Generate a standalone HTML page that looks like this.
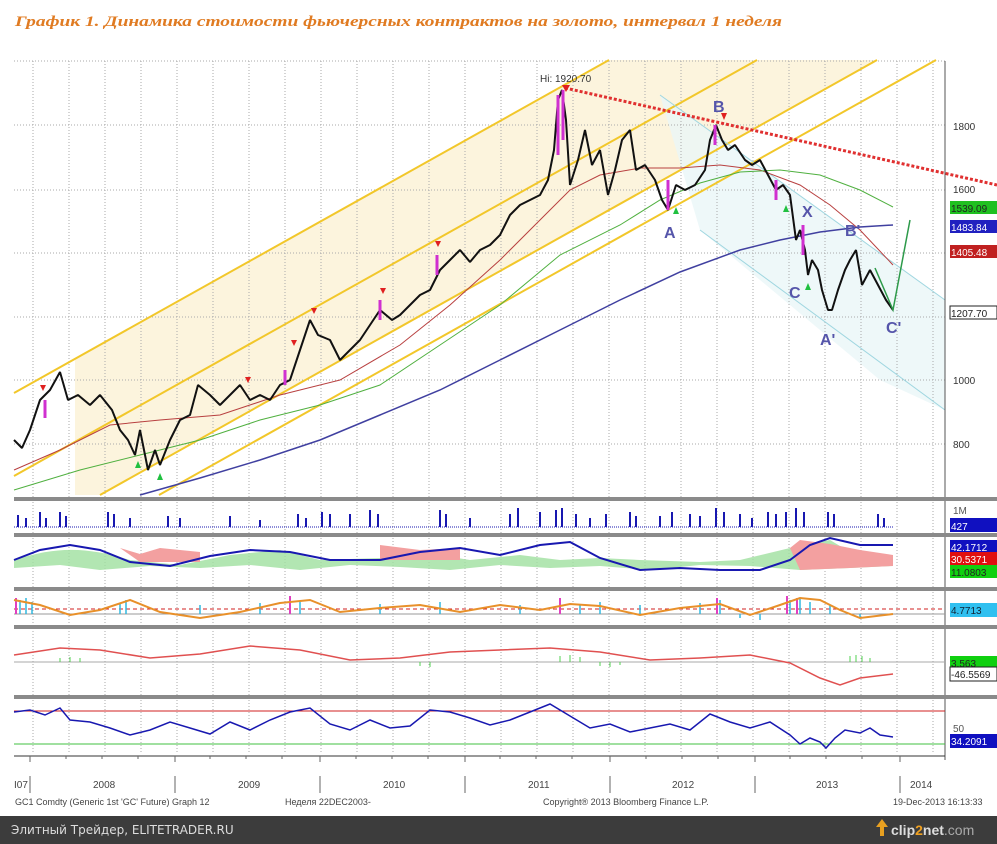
<!DOCTYPE html>
<html><head><meta charset="utf-8"><style>
html,body{margin:0;padding:0;background:#fff;width:997px;height:844px;overflow:hidden}
svg{display:block}
text{font-family:"Liberation Sans",sans-serif}
</style></head><body>
<svg width="997" height="844" viewBox="0 0 997 844">
<text x="15" y="26" textLength="767" lengthAdjust="spacingAndGlyphs" font-style="italic" font-weight="bold" font-size="15" fill="#e07b22" style="font-family:'Liberation Serif','Noto Serif CJK SC',serif">График 1.   Динамика стоимости фьючерсных контрактов на золото, интервал 1 неделя</text>
<polygon points="75,360 609,60 877,60 100,495 75,495" fill="#fbf1d4" opacity="0.8"/>
<polygon points="660,95 945,300 945,410 880,380 700,230" fill="#eaf6f8" opacity="0.8"/>
<g stroke="#aaa" stroke-dasharray="1,2" stroke-width="1">
<line x1="14" y1="61" x2="945" y2="61"/><line x1="14" y1="125" x2="945" y2="125"/><line x1="14" y1="190" x2="945" y2="190"/><line x1="14" y1="253" x2="945" y2="253"/><line x1="14" y1="317" x2="945" y2="317"/><line x1="14" y1="380" x2="945" y2="380"/><line x1="14" y1="444" x2="945" y2="444"/>
<line x1="33" y1="61" x2="33" y2="752"/><line x1="69" y1="61" x2="69" y2="752"/><line x1="105" y1="61" x2="105" y2="752"/><line x1="141" y1="61" x2="141" y2="752"/><line x1="177" y1="61" x2="177" y2="752"/><line x1="213" y1="61" x2="213" y2="752"/><line x1="249" y1="61" x2="249" y2="752"/><line x1="285" y1="61" x2="285" y2="752"/><line x1="321" y1="61" x2="321" y2="752"/><line x1="357" y1="61" x2="357" y2="752"/><line x1="393" y1="61" x2="393" y2="752"/><line x1="429" y1="61" x2="429" y2="752"/><line x1="465" y1="61" x2="465" y2="752"/><line x1="501" y1="61" x2="501" y2="752"/><line x1="537" y1="61" x2="537" y2="752"/><line x1="573" y1="61" x2="573" y2="752"/><line x1="609" y1="61" x2="609" y2="752"/><line x1="645" y1="61" x2="645" y2="752"/><line x1="681" y1="61" x2="681" y2="752"/><line x1="717" y1="61" x2="717" y2="752"/><line x1="753" y1="61" x2="753" y2="752"/><line x1="789" y1="61" x2="789" y2="752"/><line x1="825" y1="61" x2="825" y2="752"/><line x1="861" y1="61" x2="861" y2="752"/><line x1="897" y1="61" x2="897" y2="752"/><line x1="933" y1="61" x2="933" y2="752"/>
</g>
<g stroke="#f2c72a" stroke-width="2" fill="none">
<line x1="14" y1="393" x2="609" y2="60"/><line x1="14" y1="476" x2="757" y2="60"/><line x1="100" y1="495" x2="877" y2="60"/><line x1="159" y1="495" x2="936" y2="60"/>
</g>
<g stroke="#9fd6e0" stroke-width="1" fill="none"><line x1="660" y1="95" x2="945" y2="300"/><line x1="700" y1="230" x2="945" y2="410"/></g>
<polyline fill="none" stroke="#b84040" stroke-width="1" points="14,470 60,450 110,425 160,420 220,415 280,395 340,380 400,345 450,305 500,260 540,220 570,190 600,175 640,168 680,168 720,165 760,170 800,185 830,205 860,230 893,265"/>
<polyline fill="none" stroke="#50b040" stroke-width="1" points="14,490 80,470 140,455 200,440 260,420 320,405 380,385 440,345 500,305 560,255 620,225 660,200 700,183 740,172 780,170 820,175 860,190 893,207"/>
<polyline fill="none" stroke="#4040a0" stroke-width="1.5" points="140,495 200,478 260,460 320,440 380,415 440,390 500,360 560,330 620,300 680,272 740,250 780,240 820,232 860,227 893,225"/>
<line x1="565" y1="88" x2="997" y2="185" stroke="#e03030" stroke-width="3" stroke-dasharray="3,2"/>
<polyline fill="none" stroke="#111" stroke-width="2" stroke-linejoin="bevel" points="14,440 22,448 30,430 40,400 50,390 60,372 68,400 78,395 90,405 100,395 112,410 120,430 128,440 135,455 140,430 148,470 155,450 160,465 170,440 180,420 190,415 198,385 210,395 220,405 230,395 240,385 250,400 260,395 270,400 280,385 290,380 300,350 310,320 318,335 330,340 340,360 350,350 360,340 370,325 380,310 392,320 400,315 410,305 420,295 430,290 440,270 450,260 460,250 470,262 480,250 490,245 500,235 510,215 520,205 530,200 540,195 548,180 554,150 558,100 562,90 566,120 570,185 578,160 585,130 592,165 600,150 608,195 615,170 622,140 630,130 636,170 645,165 655,180 662,200 668,210 676,185 685,190 695,185 705,170 710,140 716,125 722,140 728,150 735,145 745,160 752,165 760,160 768,175 776,190 783,185 790,195 796,240 800,230 805,250 808,275 812,260 818,270 822,290 828,310 832,310 838,290 845,270 850,260 856,250 862,285 870,270 878,285 886,300 893,310"/>
<polyline fill="none" stroke="#2d9a4a" stroke-width="1.5" points="875,268 893,310 910,220"/>
<g stroke="#d030d0" stroke-width="3"><line x1="558" y1="95" x2="558" y2="155"/><line x1="563" y1="90" x2="563" y2="140"/><line x1="668" y1="180" x2="668" y2="210"/><line x1="715" y1="125" x2="715" y2="145"/><line x1="803" y1="225" x2="803" y2="255"/><line x1="776" y1="180" x2="776" y2="200"/><line x1="437" y1="255" x2="437" y2="275"/><line x1="380" y1="300" x2="380" y2="320"/><line x1="285" y1="370" x2="285" y2="385"/><line x1="45" y1="400" x2="45" y2="418"/></g>
<g fill="#e02020"><polygon points="40,385 46,385 43,391"/><polygon points="245,377 251,377 248,383"/><polygon points="291,340 297,340 294,346"/><polygon points="311,308 317,308 314,314"/><polygon points="380,288 386,288 383,294"/><polygon points="435,241 441,241 438,247"/><polygon points="562,85 570,85 566,92"/><polygon points="721,113 727,113 724,120"/></g>
<g fill="#20c040"><polygon points="135,468 141,468 138,461"/><polygon points="157,480 163,480 160,473"/><polygon points="673,214 679,214 676,207"/><polygon points="783,212 789,212 786,205"/><polygon points="805,290 811,290 808,283"/></g>
<g font-family="Liberation Serif,serif" font-weight="bold" font-size="16" fill="#5555aa" style="font-family:'Liberation Serif',serif"><text x="664" y="238">A</text><text x="713" y="112">B</text><text x="789" y="298">C</text><text x="802" y="217">X</text><text x="845" y="236">B'</text><text x="820" y="345">A'</text><text x="886" y="333">C'</text></g>
<text x="540" y="82" font-size="10" fill="#333">Hi: 1920.70</text>
<line x1="945" y1="61" x2="945" y2="760" stroke="#555"/>
<g font-size="10" fill="#333"><text x="953" y="130">1800</text><text x="953" y="193">1600</text><text x="953" y="384">1000</text><text x="953" y="448">800</text></g>
<g font-size="10">
<rect x="950" y="201" width="47" height="13" fill="#20c020"/><text x="951" y="212" fill="#222">1539.09</text>
<rect x="950" y="220" width="47" height="13" fill="#2020c0"/><text x="951" y="231" fill="#fff">1483.84</text>
<rect x="950" y="245" width="47" height="13" fill="#c02020"/><text x="951" y="256" fill="#fff">1405.48</text>
<rect x="950" y="306" width="47" height="13" fill="#fff" stroke="#222"/><text x="951" y="317" fill="#222">1207.70</text>
</g>
<g fill="#8a8a8a"><rect x="14" y="497" width="983" height="4"/><rect x="14" y="533" width="983" height="4"/><rect x="14" y="587" width="983" height="4"/><rect x="14" y="625" width="983" height="4"/><rect x="14" y="695" width="983" height="4"/></g>
<g stroke="#1818b0" stroke-width="2">
<path d="M18 527V515M26 527V518M40 527V512M46 527V518M60 527V512M66 527V516M108 527V512M114 527V514M130 527V518M168 527V516M180 527V518M230 527V516M260 527V520M298 527V514M306 527V518M322 527V512M330 527V514M350 527V514M370 527V510M378 527V514M440 527V510M446 527V514M470 527V518M510 527V514M518 527V508M540 527V512M556 527V510M562 527V508M576 527V514M590 527V518M606 527V514M630 527V512M636 527V516M660 527V516M672 527V512M690 527V514M700 527V516M716 527V508M724 527V512M740 527V514M752 527V518M768 527V512M776 527V514M786 527V512M796 527V508M804 527V512M828 527V512M834 527V514M878 527V514M884 527V518"/>
</g>
<line x1="14" y1="527" x2="893" y2="527" stroke="#1818b0" stroke-width="1" stroke-dasharray="1,1"/>
<rect x="950" y="518" width="47" height="14" fill="#1010c0"/><text x="951" y="530" font-size="10" fill="#fff">427</text><text x="953" y="514" font-size="10" fill="#555">1M</text>
<path d="M14 560 C60 545 90 548 130 560 L180 565 230 555 280 550 320 560 380 558 420 552 470 560 520 555 560 560 600 558 640 560 700 562 740 560 790 548 830 540 850 552 893 557 L893 566 850 568 800 570 750 566 700 565 650 570 600 566 550 568 500 565 450 570 400 567 350 565 300 570 250 565 200 568 150 566 100 570 60 565 14 568Z" fill="#9fe09f" opacity="0.8"/>
<path d="M790 548 L800 540 830 544 860 550 893 555 L893 566 850 568 800 570Z" fill="#f3a0a0"/>
<path d="M120 548 L140 554 160 548 200 552 L200 562 140 562Z M380 545 L420 550 460 548 L460 560 380 560Z" fill="#f3a0a0"/>
<polyline fill="none" stroke="#1818b0" stroke-width="2" points="14,560 40,550 70,545 100,550 130,562 170,566 210,556 250,550 290,552 330,560 380,560 420,552 460,548 500,555 540,545 570,542 600,558 640,570 680,568 720,570 760,570 790,560 810,545 830,538 860,545 893,545"/>
<rect x="950" y="540" width="47" height="13" fill="#1010c0"/><text x="951" y="551" font-size="10" fill="#fff">42.1712</text>
<rect x="950" y="552" width="47" height="13" fill="#e01010"/><text x="951" y="563" font-size="10" fill="#fff">30.5371</text>
<rect x="950" y="565" width="47" height="13" fill="#10d010"/><text x="951" y="576" font-size="10" fill="#222">11.0803</text>
<line x1="14" y1="609" x2="945" y2="609" stroke="#d02020" stroke-dasharray="4,3"/>
<line x1="14" y1="614" x2="945" y2="614" stroke="#999"/>
<g stroke="#30b8e0" stroke-width="1.5"><path d="M20 614V600M26 614V598M32 614V602M120 614V604M126 614V600M200 614V605M260 614V603M290 614V598M300 614V602M380 614V604M440 614V602M520 614V605M580 614V604M600 614V602M640 614V605M700 614V603M720 614V600M740 614V618M760 614V620M790 614V600M800 614V598M810 614V602M830 614V605M860 614V618"/></g>
<g stroke="#e040c0" stroke-width="2"><path d="M16 614V598M290 614V596M560 614V598M717 614V598M787 614V596M797 614V598"/></g>
<polyline fill="none" stroke="#e8902a" stroke-width="2" points="14,600 40,605 70,615 100,610 130,600 160,612 200,618 240,612 280,603 310,600 340,612 380,608 420,605 460,612 500,605 540,610 570,604 600,606 640,615 680,608 720,604 750,615 780,605 800,598 820,600 840,610 860,618 893,614"/>
<rect x="950" y="603" width="47" height="14" fill="#30c0f0"/><text x="951" y="614" font-size="10" fill="#123">4.7713</text>
<line x1="14" y1="662" x2="945" y2="662" stroke="#aaa"/>
<polyline fill="none" stroke="#e05050" stroke-width="1.5" points="14,655 60,648 100,650 150,658 200,654 250,646 300,650 350,660 400,658 450,652 500,650 550,648 600,652 650,660 700,658 750,655 790,663 820,678 840,685 860,678 893,674"/>
<g stroke="#50d050" stroke-width="1"><path d="M60 662V658M70 662V657M80 662V658M420 662V666M430 662V667M560 662V656M570 662V655M580 662V657M600 662V666M610 662V667M620 662V665M850 662V656M856 662V655M862 662V656M870 662V658"/></g>
<rect x="950" y="656" width="47" height="13" fill="#10d010"/><text x="951" y="667" font-size="10" fill="#222">3.563</text>
<rect x="950" y="667" width="47" height="14" fill="#fff" stroke="#222"/><text x="951" y="678" font-size="10" fill="#222">-46.5569</text>
<line x1="14" y1="711" x2="945" y2="711" stroke="#d02020"/>
<line x1="14" y1="744" x2="945" y2="744" stroke="#40c040"/>
<polyline fill="none" stroke="#1818b0" stroke-width="1.5" points="14,712 30,710 45,715 60,708 70,720 90,722 110,728 130,735 150,730 170,722 190,728 210,734 230,722 250,730 270,720 290,712 310,708 330,724 350,730 370,720 390,728 410,726 430,710 450,712 470,718 490,725 510,720 530,712 550,704 570,716 590,728 610,724 630,732 650,728 670,724 690,730 710,714 730,722 750,728 770,722 790,735 800,744 810,738 820,742 826,748 835,738 845,730 860,733 870,728 880,735 893,737"/>
<text x="953" y="732" font-size="10" fill="#555">50</text>
<rect x="950" y="734" width="47" height="14" fill="#1010c0"/><text x="951" y="745" font-size="10" fill="#fff">34.2091</text>
<line x1="14" y1="756" x2="945" y2="756" stroke="#333"/>
<g stroke="#666"><path d="M30 756V762M175 756V762M320 756V762M465 756V762M610 756V762M755 756V762M900 756V762M66 756V759M102 756V759M138 756V759M210 756V759M246 756V759M282 756V759M356 756V759M392 756V759M428 756V759M500 756V759M536 756V759M572 756V759M646 756V759M682 756V759M718 756V759M790 756V759M826 756V759M862 756V759"/>
<path d="M30 776V793M175 776V793M320 776V793M465 776V793M610 776V793M755 776V793M900 776V793"/></g>
<g font-size="10" fill="#444"><text x="14" y="788">I07</text><text x="93" y="788">2008</text><text x="238" y="788">2009</text><text x="383" y="788">2010</text><text x="528" y="788">2011</text><text x="672" y="788">2012</text><text x="816" y="788">2013</text><text x="910" y="788">2014</text>
<text x="15" y="805" font-size="9">GC1 Comdty (Generic 1st 'GC' Future) Graph 12</text><text x="285" y="805" font-size="9">Неделя 22DEC2003-</text><text x="543" y="805" font-size="9">Copyright® 2013 Bloomberg Finance L.P.</text><text x="893" y="805" font-size="9">19-Dec-2013 16:13:33</text></g>
<rect x="0" y="816" width="997" height="28" fill="#3c3c3c"/>
<text x="11" y="834" font-size="12" fill="#ddd" style="font-family:'DejaVu Sans',sans-serif">Элитный Трейдер, ELITETRADER.RU</text>
<polygon points="880,836 880,827 876,827 882,819 888,827 884,827 884,836" fill="#e8a020"/>
<text x="891" y="835" font-size="14" font-weight="bold" fill="#ddd">clip<tspan fill="#f0a020">2</tspan>net<tspan font-weight="normal" fill="#aaa">.com</tspan></text>
</svg>
</body></html>
